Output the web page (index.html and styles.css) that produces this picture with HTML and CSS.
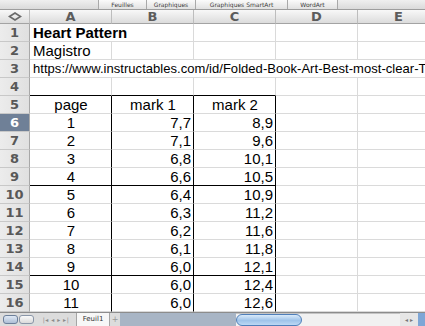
FILE: index.html
```html
<!DOCTYPE html>
<html lang="fr">
<head>
    <meta charset="UTF-8">
    <title>Heart Pattern</title>
    <link rel="stylesheet" href="styles.css">
</head>
<body>
    <div class="ribbon">
        <div class="tab t1">Feuilles</div>
        <div class="tab t2">Graphiques</div>
        <div class="tab t3">Graphiques SmartArt</div>
        <div class="tab t4">WordArt</div>
    </div>

    <div class="sheet">
        <div class="corner">
            <svg width="14" height="9" viewBox="0 0 14 9"><polygon points="1.5,4.5 7,1 12.5,4.5 7,8" fill="none" stroke="#6a6a6a" stroke-width="1.6"/></svg>
        </div>
        <div class="colhead">A</div>
        <div class="colhead">B</div>
        <div class="colhead">C</div>
        <div class="colhead">D</div>
        <div class="colhead">E</div>

        <div class="rowhead">1</div>
        <div class="cell bold span2">Heart Pattern</div>
        <div class="cell"></div><div class="cell"></div><div class="cell"></div>

        <div class="rowhead">2</div>
        <div class="cell">Magistro</div>
        <div class="cell"></div><div class="cell"></div><div class="cell"></div><div class="cell"></div>

        <div class="rowhead">3</div>
        <div class="cell url">https://www.instructables.com/id/Folded-Book-Art-Best-most-clear-T</div>

        <div class="rowhead">4</div>
        <div class="cell tb"></div><div class="cell tb"></div><div class="cell tb"></div><div class="cell"></div><div class="cell"></div>

        <div class="rowhead">5</div>
        <div class="cell c tr">page</div><div class="cell c tr">mark 1</div><div class="cell c tr">mark 2</div><div class="cell"></div><div class="cell"></div>

        <div class="rowhead sel">6</div>
        <div class="cell c tr">1</div><div class="cell r tr">7,7</div><div class="cell r tr">8,9</div><div class="cell"></div><div class="cell"></div>

        <div class="rowhead">7</div>
        <div class="cell c tr">2</div><div class="cell r tr">7,1</div><div class="cell r tr">9,6</div><div class="cell"></div><div class="cell"></div>

        <div class="rowhead">8</div>
        <div class="cell c tr">3</div><div class="cell r tr">6,8</div><div class="cell r tr">10,1</div><div class="cell"></div><div class="cell"></div>

        <div class="rowhead">9</div>
        <div class="cell c tr tb">4</div><div class="cell r tr tb">6,6</div><div class="cell r tr tb">10,5</div><div class="cell"></div><div class="cell"></div>

        <div class="rowhead">10</div>
        <div class="cell c tr">5</div><div class="cell r tr">6,4</div><div class="cell r tr">10,9</div><div class="cell"></div><div class="cell"></div>

        <div class="rowhead">11</div>
        <div class="cell c tr">6</div><div class="cell r tr">6,3</div><div class="cell r tr">11,2</div><div class="cell"></div><div class="cell"></div>

        <div class="rowhead">12</div>
        <div class="cell c tr">7</div><div class="cell r tr">6,2</div><div class="cell r tr">11,6</div><div class="cell"></div><div class="cell"></div>

        <div class="rowhead">13</div>
        <div class="cell c tr">8</div><div class="cell r tr">6,1</div><div class="cell r tr">11,8</div><div class="cell"></div><div class="cell"></div>

        <div class="rowhead">14</div>
        <div class="cell c tr tb">9</div><div class="cell r tr tb">6,0</div><div class="cell r tr tb">12,1</div><div class="cell"></div><div class="cell"></div>

        <div class="rowhead">15</div>
        <div class="cell c tr">10</div><div class="cell r tr">6,0</div><div class="cell r tr">12,4</div><div class="cell"></div><div class="cell"></div>

        <div class="rowhead">16</div>
        <div class="cell c tr">11</div><div class="cell r tr">6,0</div><div class="cell r tr">12,6</div><div class="cell"></div><div class="cell"></div>
    </div>

    <div class="status">
        <div class="views">
            <span class="view on"></span>
            <span class="view"></span>
        </div>
        <div class="nav">|◂ ◂ ▸ ▸|</div>
        <div class="sheettab">Feuil1</div>
        <div class="add">+</div>
        <div class="blank"></div>
        <div class="track">
            <div class="thumb"></div>
        </div>
        <div class="arrows">◂ ▸</div>
        <div class="corner-end"></div>
    </div>
</body>
</html>
```

FILE: styles.css
```css
body {
    margin: 0;
    width: 425px;
    height: 326px;
    overflow: hidden;
    background: #fff;
    font-family: "Liberation Sans", Arial, sans-serif;
}

.ribbon {
    display: flex;
    height: 10px;
    padding-left: 98px;
    box-sizing: border-box;
    background: linear-gradient(#efefef, #dadada);
    border-bottom: 1px solid #9d9d9d;
}

.tab {
    height: 9px;
    border-left: 1px solid #a9a9a9;
    box-sizing: border-box;
    background: linear-gradient(#fbfbfb, #e1e1e1);
    color: #3c3c3c;
    font: 6px "DejaVu Sans", sans-serif;
    line-height: 9px;
    text-align: center;
}

.t1 { width: 48px; }
.t2 { width: 49px; }
.t3 { width: 92px; }
.t4 { width: 51px; border-right: 1px solid #a9a9a9; }

.sheet {
    display: grid;
    grid-template-columns: 30px repeat(5, 82px);
    grid-template-rows: 14px repeat(16, 18px);
}

.corner,
.colhead {
    box-sizing: border-box;
    background: linear-gradient(#f8f8f8, #dcdcdc);
    border-right: 1px solid #bdbdbd;
    border-bottom: 1px solid #a3a3a3;
}

.corner {
    display: flex;
    align-items: center;
    justify-content: center;
}

.colhead {
    color: #5c5c5c;
    font: bold 13px "DejaVu Sans", sans-serif;
    line-height: 13px;
    text-align: center;
}

.rowhead {
    box-sizing: border-box;
    background: linear-gradient(to right, #ececec, #e0e0e0);
    border-right: 1px solid #a8a8a8;
    border-bottom: 1px solid #c8c8c8;
    color: #585858;
    font: bold 13px "DejaVu Sans", sans-serif;
    line-height: 17px;
    text-align: center;
}

.rowhead.sel {
    background: #6f8097;
    color: #fff;
}

.cell {
    box-sizing: border-box;
    padding: 0 2px 0 3px;
    border-right: 1px solid #dadada;
    border-bottom: 1px solid #dadada;
    font-size: 15px;
    line-height: 17px;
    white-space: nowrap;
    color: #000;
}

.bold { font-weight: bold; }
.span2 { grid-column: span 2; }

.url {
    grid-column: 2 / -1;
    font-size: 13px;
    letter-spacing: 0.04px;
    overflow: hidden;
    border-right: none;
}

.c { text-align: center; }
.r { text-align: right; }
.tr { border-right-color: #000; }
.tb { border-bottom-color: #000; }

.status {
    display: flex;
    height: 14px;
    box-sizing: border-box;
    background: #dcdcdc;
    border-top: 1px solid #8c8c8c;
    font-family: "DejaVu Sans", sans-serif;
    color: #8a8a8a;
}

.views {
    display: flex;
    gap: 1px;
    width: 36px;
    padding: 2px 0 0 3px;
    box-sizing: border-box;
}

.view {
    width: 15px;
    height: 9px;
    box-sizing: border-box;
    border: 1px solid #8a96a8;
    border-radius: 3px;
    background: linear-gradient(#fafafa, #dadada);
}

.view.on {
    background: linear-gradient(#dfe8f4, #aebfd6);
    border-color: #6c7f9a;
}

.nav {
    width: 40px;
    font-size: 6px;
    line-height: 13px;
    text-align: center;
    letter-spacing: 0.5px;
}

.sheettab {
    width: 34px;
    box-sizing: border-box;
    background: #f7f7f7;
    border-left: 1px solid #a5a5a5;
    border-right: 1px solid #a5a5a5;
    color: #333;
    font-size: 7px;
    line-height: 13px;
    text-align: center;
}

.add {
    width: 10px;
    font-size: 8px;
    line-height: 13px;
    text-align: center;
    color: #999;
}

.blank {
    width: 116px;
    background: #a8b5c5;
}

.track {
    display: flex;
    width: 164px;
    background: #f1f1f1;
    border-top: 1px solid #c4c4c4;
    box-sizing: border-box;
}

.thumb {
    width: 66px;
    height: 12px;
    box-sizing: border-box;
    border: 1px solid #4f7fba;
    border-radius: 6px;
    background: linear-gradient(#d9eafa, #9fc4ea 55%, #bcd8f4);
}

.arrows {
    width: 18px;
    font-size: 6px;
    line-height: 13px;
    text-align: center;
    color: #777;
    background: #e6e6e6;
}

.corner-end {
    flex: 1;
    background: #7ea6d6;
}
```
